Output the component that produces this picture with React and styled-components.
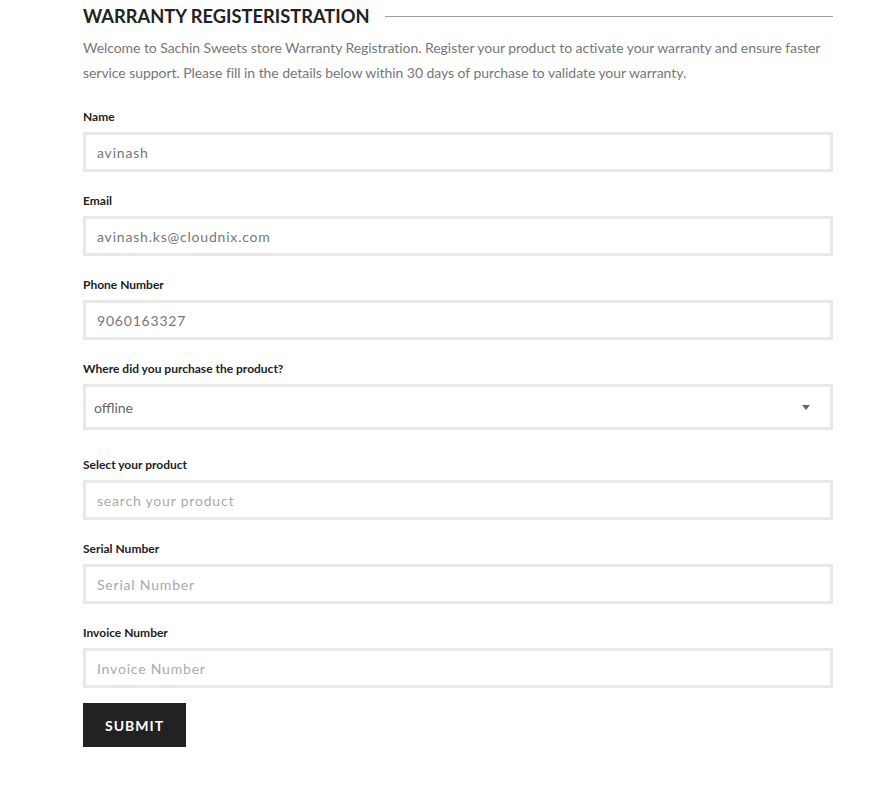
import React, { useState } from 'react';
import styled, { createGlobalStyle } from 'styled-components';

const GlobalStyle = createGlobalStyle`
  html, body {
    margin: 0;
    padding: 0;
    background: #fff;
  }
  body {
    font-family: Lato, "Open Sans", "Liberation Sans", sans-serif;
    color: #222;
  }
`;

const Page = styled.div`
  width: 750px;
  margin: 0 0 0 83px;
  padding-top: 4px;
`;

const TitleRow = styled.div`
  display: flex;
  align-items: center;
  gap: 15px;
`;

const Title = styled.h2`
  margin: 0;
  font-size: 18.3px;
  line-height: 24px;
  font-weight: 700;
  text-transform: uppercase;
  color: #222;
  white-space: nowrap;
`;

const TitleRule = styled.span`
  flex: 1;
  height: 1px;
  background: #9c9cab;
`;

const Intro = styled.p`
  margin: 7px 0 24px;
  font-size: 14px;
  line-height: 25px;
  letter-spacing: -0.004em;
  color: #777;
`;

const Field = styled.div`
  display: flex;
  flex-direction: column;
  margin-bottom: ${p => p.$gap || 21}px;
`;

const Label = styled.label`
  font-size: 12px;
  line-height: 16px;
  font-weight: 700;
  color: #222;
  margin-bottom: 7px;
`;

const Input = styled.input`
  box-sizing: border-box;
  width: 100%;
  height: 40px;
  border: 3px solid #e8e8e8;
  padding: 0 11px;
  font-family: inherit;
  font-size: 14px;
  letter-spacing: 0.8px;
  color: #777;
  outline: none;
  background: #fff;

  &::placeholder {
    color: #aaa;
  }
`;

const SelectBox = styled.div`
  box-sizing: border-box;
  height: 46px;
  border: 3px solid #e8e8e8;
  padding: 0 20px 0 8px;
  display: flex;
  align-items: center;
  justify-content: space-between;
  font-size: 14px;
  color: #666;
`;

const Caret = styled.span`
  width: 0;
  height: 0;
  border-left: 4px solid transparent;
  border-right: 4px solid transparent;
  border-top: 5px solid #666;
`;

const SubmitButton = styled.button`
  height: 44px;
  padding: 0 22px;
  border: none;
  background: #222;
  color: #fff;
  font-family: inherit;
  font-size: 14px;
  font-weight: 700;
  letter-spacing: 1px;
  text-transform: uppercase;
  cursor: pointer;
`;

const fields = [
  { id: 'name', label: 'Name', value: 'avinash' },
  { id: 'email', label: 'Email', value: 'avinash.ks@cloudnix.com' },
  { id: 'phone', label: 'Phone Number', value: '9060163327' },
];

const lowerFields = [
  { id: 'product', label: 'Select your product', placeholder: 'search your product' },
  { id: 'serial', label: 'Serial Number', placeholder: 'Serial Number' },
  { id: 'invoice', label: 'Invoice Number', placeholder: 'Invoice Number', gap: 15 },
];

export default function App() {
  const [values, setValues] = useState(
    Object.fromEntries(fields.map(f => [f.id, f.value]))
  );

  return (
    <>
      <GlobalStyle />
      <Page>
        <TitleRow>
          <Title>Warranty Registeristration</Title>
          <TitleRule />
        </TitleRow>
        <Intro>
          Welcome to Sachin Sweets store Warranty Registration. Register your product to activate your warranty and ensure faster service support. Please fill in the details below within 30 days of purchase to validate your warranty.
        </Intro>

        {fields.map(f => (
          <Field key={f.id}>
            <Label htmlFor={f.id}>{f.label}</Label>
            <Input
              id={f.id}
              value={values[f.id]}
              onChange={e => setValues({ ...values, [f.id]: e.target.value })}
            />
          </Field>
        ))}

        <Field $gap={27}>
          <Label>Where did you purchase the product?</Label>
          <SelectBox>
            <span>offline</span>
            <Caret />
          </SelectBox>
        </Field>

        {lowerFields.map(f => (
          <Field key={f.id} $gap={f.gap}>
            <Label htmlFor={f.id}>{f.label}</Label>
            <Input id={f.id} placeholder={f.placeholder} />
          </Field>
        ))}

        <SubmitButton>Submit</SubmitButton>
      </Page>
    </>
  );
}
